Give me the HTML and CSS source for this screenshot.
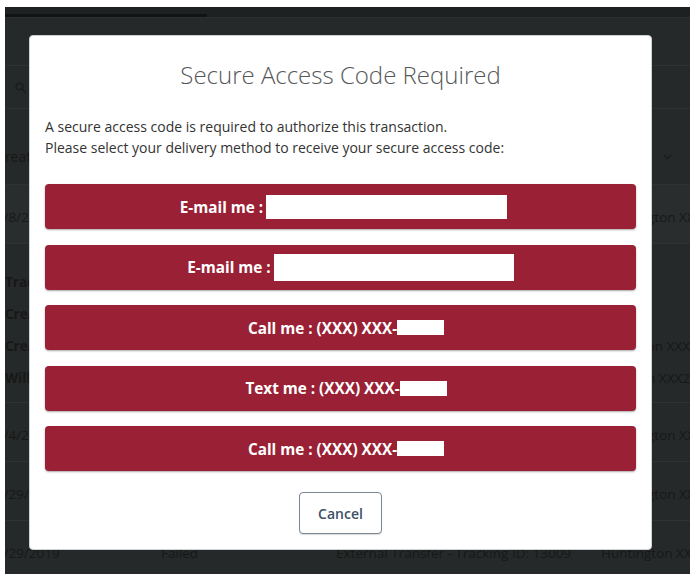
FILE: index.html
```html
<!DOCTYPE html>
<html lang="en">
<head>
<meta charset="utf-8">
<title>Secure Access Code Required</title>
<link rel="stylesheet" href="styles.css">
</head>
<body>
<div class="page">
  <div class="topbar"><span class="tab-line"></span></div>
  <div class="blank-row"></div>
  <div class="search-row">
    <svg class="search-icon" width="11" height="11" viewBox="0 0 11 11"><circle cx="4.5" cy="4.5" r="3.3" fill="none" stroke="currentColor" stroke-width="1.6"/><path d="M7 7l3.2 3.2" stroke="currentColor" stroke-width="1.8" stroke-linecap="round"/></svg>
  </div>
  <div class="filter-row">
    <span class="filter-label">Created</span>
    <svg class="chevron" width="9" height="6" viewBox="0 0 9 6"><path d="M1 1l3.5 3.5L8 1" fill="none" stroke="currentColor" stroke-width="1.4"/></svg>
  </div>
  <div class="row shade">
    <span class="cell-date">10/8/2019</span>
    <span class="cell-status"></span>
    <span class="cell-desc"></span>
    <span class="cell-account">Huntington XXX2</span>
  </div>
  <div class="detail">
    <div class="detail-line"><b>Tracking ID:</b></div>
    <div class="detail-line"><b>Created By:</b></div>
    <div class="detail-line"><b>Created On:</b><span class="acct-a">Huntington XXX</span></div>
    <div class="detail-line"><b>Will Process:</b><span class="acct-b">Huntington XXX2</span></div>
  </div>
  <div class="row">
    <span class="cell-date">10/4/2019</span>
    <span class="cell-status"></span>
    <span class="cell-desc"></span>
    <span class="cell-account">Huntington XXX2</span>
  </div>
  <div class="row">
    <span class="cell-date">10/29/2019</span>
    <span class="cell-status"></span>
    <span class="cell-desc"></span>
    <span class="cell-account">Huntington XXX2</span>
  </div>
  <div class="row last">
    <span class="cell-date">10/29/2019</span>
    <span class="cell-status">Failed</span>
    <span class="cell-desc">External Transfer - Tracking ID: 13009</span>
    <span class="cell-account bank">Huntington XXX2</span>
  </div>
</div>

<div class="modal" role="dialog" aria-labelledby="modal-title">
  <h2 id="modal-title" class="modal-title">Secure Access Code Required</h2>
  <p class="modal-text">A secure access code is required to authorize this transaction.<br>Please select your delivery method to receive your secure access code:</p>
  <div class="options">
    <button class="option">E-mail me :<span class="mask mask-email-a"></span></button>
    <button class="option">E-mail me :<span class="mask mask-email-b"></span></button>
    <button class="option">Call me : (XXX) XXX-<span class="mask mask-phone"></span></button>
    <button class="option">Text me : (XXX) XXX-<span class="mask mask-phone"></span></button>
    <button class="option">Call me : (XXX) XXX-<span class="mask mask-phone"></span></button>
  </div>
  <div class="actions">
    <button class="cancel">Cancel</button>
  </div>
</div>
</body>
</html>
```
FILE: styles.css
```css
html, body {
  margin: 0;
  padding: 0;
  background: #ffffff;
}

body {
  width: 690px;
  height: 574px;
  overflow: hidden;
  font-family: "Open Sans", "DejaVu Sans", sans-serif;
}

/* dimmed page behind the dialog */
.page {
  margin: 7px 0 0 5px;
  height: 567px;
  background: #262929;
  overflow: hidden;
  color: #161818;
  font-size: 13.5px;
}

.topbar {
  height: 10px;
  background: #1e2122;
  display: flex;
  align-items: flex-end;
  border-bottom: 1px solid #2d3030;
}

.tab-line {
  width: 202px;
  height: 3px;
  background: #121414;
}

.blank-row {
  height: 47px;
}

.search-row {
  height: 42px;
  border-top: 1px solid #2f3232;
  border-bottom: 1px solid #2f3232;
  display: flex;
  align-items: center;
  padding-left: 10px;
}

.search-icon {
  color: #1b1d1e;
}

.filter-row {
  height: 76px;
  border-bottom: 1px solid #2f3232;
  display: flex;
  align-items: center;
  justify-content: space-between;
  padding-top: 20px;
  padding-right: 18px;
  box-sizing: border-box;
}

.filter-label {
  margin-left: -9px;
  font-size: 14px;
}

.chevron {
  color: #1b1d1e;
}

/* table rows: date, status, description, account */
.row {
  height: 59px;
  border-bottom: 1px solid #2f3232;
  display: grid;
  grid-template-columns: 156px 175px 265px 1fr;
  align-items: center;
  white-space: nowrap;
  padding-top: 5px;
  box-sizing: border-box;
}

.row.shade {
  background: #2a2d2e;
}

.cell-date {
  margin-left: -17px;
}

.cell-account {
  margin-left: 3px;
}

.cell-account.bank {
  margin-left: 0;
}

.detail {
  height: 159px;
  border-bottom: 1px solid #2f3232;
  padding-top: 29px;
  box-sizing: border-box;
}

.detail-line {
  height: 32px;
  display: flex;
  white-space: nowrap;
}

.detail-line b {
  font-weight: 700;
  width: 100px;
}

.acct-a {
  margin-left: 500px;
}

.acct-b {
  margin-left: 481px;
}

.row.last {
  align-items: start;
  padding-top: 23px;
  border-bottom: none;
}

/* dialog */
.modal {
  position: absolute;
  top: 35px;
  left: 29px;
  width: 623px;
  box-sizing: border-box;
  background: #ffffff;
  border: 1px solid #cfd2d4;
  border-radius: 4px;
  padding: 23px 15px 15px;
}

.modal-title {
  margin: 0;
  text-align: center;
  font-size: 24px;
  line-height: 32px;
  font-weight: 300;
  color: #555759;
}

.modal-text {
  margin: 25px 0 0;
  font-size: 14px;
  line-height: 21px;
  color: #333333;
}

.options {
  margin-top: 26px;
  display: flex;
  flex-direction: column;
  gap: 15.5px;
}

.option {
  height: 45px;
  border: none;
  border-radius: 4px;
  background: #9a2035;
  color: #ffffff;
  font-family: inherit;
  font-size: 15.3px;
  font-weight: 700;
  display: flex;
  align-items: center;
  justify-content: center;
  padding: 0;
  box-shadow: 0 1px 2px rgba(0, 0, 0, 0.35);
  white-space: nowrap;
}

.mask {
  display: inline-block;
  background: #ffffff;
}

.mask-email-a {
  width: 241px;
  height: 24px;
  margin-left: 3px;
  margin-right: -6px;
}

.mask-email-b {
  width: 240px;
  height: 27px;
  margin-left: 3px;
  margin-right: -20px;
}

.mask-phone {
  width: 47px;
  height: 15px;
  margin-right: -11px;
}

.actions {
  margin-top: 21px;
  display: flex;
  justify-content: center;
}

.cancel {
  width: 83px;
  height: 42px;
  background: #ffffff;
  border: 1px solid #7a8896;
  border-radius: 4px;
  color: #3e5064;
  font-family: inherit;
  font-size: 14px;
  font-weight: 600;
  box-shadow: 0 1px 1px rgba(0, 0, 0, 0.15);
  padding: 0;
}
```
